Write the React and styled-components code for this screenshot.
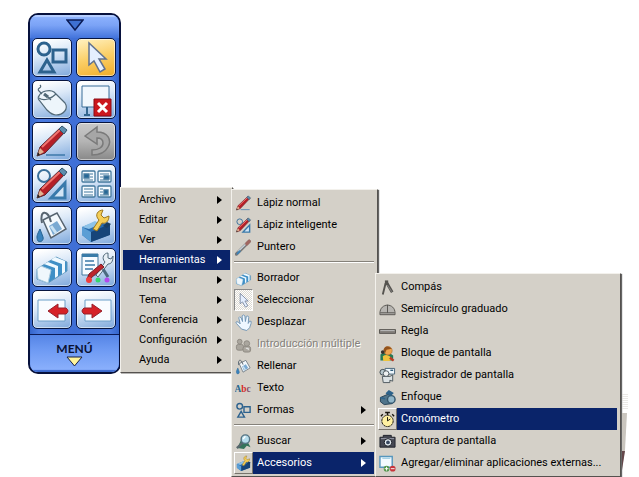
import React from "react";
import styled, { createGlobalStyle, css } from "styled-components";

const Global = createGlobalStyle`
  * { box-sizing: border-box; }
  body { margin: 0; min-height: 100vh; background: #fff; }
  button { font: inherit; color: inherit; border: 0; padding: 0; background: none; }
`;

const Desktop = styled.main`
  display: flex;
  align-items: flex-end;
  width: fit-content;
  padding: 13px 0 0 28px;
  font: 11px/20px Roboto, "DejaVu Sans Condensed", sans-serif;
  color: #000;
`;

const Toolbar = styled.aside`
  display: flex;
  flex-direction: column;
  width: 93px;
  border: 2px solid #07113c;
  border-radius: 10px;
  overflow: hidden;
  background: linear-gradient(90deg, #3566cc, #4b7be0 10%, #3f6fd6 50%, #4b7be0 90%, #3566cc);
`;

const Collapse = styled.button`
  display: flex;
  justify-content: center;
  height: 23px;
  padding-top: 4px;
  background: linear-gradient(#8fb4ff, #7ba3f6 45%, #4374dc);
  box-shadow: inset 0 2px 1px #b8d0ff;
`;

const Tools = styled.div`
  display: grid;
  grid-template-columns: 40px 40px;
  gap: 3px 4px;
  padding: 0 2px 5px;
`;

const faces = {
  blue: "linear-gradient(165deg, #ffffff 8%, #dce9f8 40%, #7fa9dc 100%)",
  gold: "linear-gradient(165deg, #ffedb5 8%, #fbcf68 50%, #f1ad28 100%)",
  gray: "linear-gradient(#c9c9c9, #b4b4b4 50%, #888888)",
};

const ToolButton = styled.button`
  display: flex;
  align-items: center;
  justify-content: center;
  height: 39px;
  border: 1px solid #07153f;
  border-radius: 5px;
  background: ${(p) => faces[p.$face]};
  box-shadow: inset 0 0 0 1px #ffffff88;
  svg { width: 36px; height: 36px; }
`;

const MenuButton = styled.button`
  display: flex;
  flex-direction: column;
  align-items: center;
  height: 38px;
  padding-top: 6px;
  border-top: 1px solid #0c1c58;
  background: linear-gradient(#5585e6, #6e9af3 40%, #8db2fd);
  box-shadow: inset 0 -2px 1px #3a68cb;
  font: bold 12px/15px Lato, sans-serif;
  color: #0a1233;
`;

const Menu = styled.ul`
  position: relative;
  z-index: 1;
  margin: 0 0 1px -1px;
  padding: 2px;
  list-style: none;
  width: max-content;
  min-width: ${(p) => p.$min};
  background: #d4d0c8;
  border: 1px solid;
  border-color: #f3f1ec #55524f #55524f #f3f1ec;
  box-shadow: 1px 1px 0 #77747088;
`;

const Submenu = styled(Menu)`
  position: absolute;
  margin: 0;
  padding-right: 3px;
  left: calc(100% + 1px);
  box-shadow: 1px 1px 1px #666;
  ${(p) => (p.$up ? css`bottom: -3px;` : css`top: -61px;`)}
`;

const Entry = styled.li`
  position: relative;
`;

const Item = styled.button`
  display: flex;
  width: 100%;
  height: ${(p) => (p.$icon ? "22px" : "20px")};
  line-height: ${(p) => (p.$icon ? "22px" : "20px")};
  text-align: left;
  white-space: nowrap;
`;

const IconCell = styled.span`
  display: flex;
  align-items: center;
  justify-content: center;
  flex: none;
  width: 19px;
  border: 1px solid transparent;
  svg { flex: none; width: 17px; height: 17px; }
  ${(p) => p.$state === "raised" && css`border-color: #fff #77736c #77736c #fff;`}
  ${(p) => p.$state === "checked" && css`
    border-color: #888 #fff #fff #888;
    background: repeating-conic-gradient(#fff 0 25%, #dcd9d2 0 50%) 0 0 / 2px 2px;
  `}
`;

const Label = styled.span`
  display: flex;
  flex: 1;
  align-items: center;
  justify-content: space-between;
  padding: 0 8px 0 ${(p) => (p.$icon ? "4px" : "16px")};
  ${(p) => p.$active && css`background: #0a246a; color: #fff;`}
  ${(p) => p.$disabled && css`color: #85827c; text-shadow: 1px 1px 0 #fff;`}
`;

const Separator = styled.hr`
  height: 2px;
  margin: 3px 0 4px;
  border: 0;
  border-top: 1px solid #85817a;
  border-bottom: 1px solid #fff;
`;

const Arrow = () => (
  <svg width="5" height="8" viewBox="0 0 5 8" aria-hidden="true"><path d="M0 0 5 4 0 8Z" fill="currentColor" /></svg>
);

const Backdrop = styled.svg`
  position: absolute;
  left: calc(100% + 1px);
  bottom: 2px;
`;

/* Icon artwork, all on a 36-unit grid */
const pencil = (
  <g>
    <path d="M3 32 6 23 27 3l5 4-21 22Z" fill="#b51f27" stroke="#56242c" />
    <path d="M8 23 27 5" stroke="#f1746e" strokeWidth="2" />
    <path d="m3 32 3-8 4 4Z" fill="#e3b391" />
    <path d="m3 32 1-4 2 3Z" fill="#222" />
    <path d="m25 5 3-3 5 4-3 4Z" fill="#5d8eae" stroke="#34566e" />
  </g>
);
const bucket = (
  <g>
    <path d="m9 12 14-7 9 16-15 9Z" fill="#f3f8fc" stroke="#56636f" strokeWidth="1.5" />
    <path d="m15 18 8-5 5 8-9 6Z" fill="#79a9d2" />
    <path d="m17 18 5 7" stroke="#c9e2f3" strokeWidth="3" />
    <path d="M8 15C5 2 14 1 17 14" fill="none" stroke="#586571" strokeWidth="2" />
    <path d="M6 21C3 27 2 29 4 33c3 2 6-1 5-4Z" fill="#3a83be" stroke="#286493" />
  </g>
);
const toolbox = (
  <g>
    <path d="m4 19 13-5 15 2-1 11-18 7-9-7Z" fill="#276baf" />
    <path d="m13 24 19-8v11l-19 7Z" fill="#164579" />
    <path d="m4 19 9 5v10l-9-7Z" fill="#5b9ed5" />
    <path d="m4 19 13-6 5 3-11 5Z" fill="#8cc2e8" />
    <path d="m15 21 6-9c-5-5-1-10 4-10l-2 5 3 3 5-2c0 6-4 8-7 7l-5 8Z" fill="#f4ce58" stroke="#9d771d" />
    <path d="m25 18 4-4 4 2-4 4Z" fill="#193e62" />
  </g>
);
const art = {
  shapes: <g fill="none" stroke="#2d628e" strokeWidth="3"><circle cx="10" cy="9" r="6" /><path d="M19 10h13v12H19ZM13 20l7 12H6Z" /></g>,
  pointer: <path d="M11 3v22l5-4 6 11 5-3-6-10h7Z" fill="#e5efff" stroke="#62728e" strokeWidth="1.5" />,
  mouse: <g fill="none" stroke="#526977" strokeWidth="1.2"><path d="M5 14c2-5 11-7 15-4l11 11c4 6-2 12-9 12-4 0-6-2-9-5L5 18c-1-1-1-3 0-4Z" fill="#edf5fb" /><path d="M5 16c5 4 13 0 17-4M11 12l6 6M8 12 5 9c-3-3 4-3 1-6" /><path d="m10 12 4 3" strokeWidth="3" /></g>,
  screen: <g><path d="M4 4h27v21H4Z" fill="#f1f7fd" stroke="#386c98" /><path d="M9 25v8m-3 0h6" stroke="#34668f" strokeWidth="2" /><path d="M16 17h17v17H16Z" fill="#cc171d" stroke="#8a0b15" /><path d="m20 21 9 9m0-9-9 9" stroke="#fff" strokeWidth="3" /></g>,
  pen: <g><path d="M12 31h19" stroke="#3d79aa" strokeWidth="1.5" />{pencil}</g>,
  undo: <path d="m7 12 12-9v5c11 0 15 8 11 15-3 6-9 8-16 8v-5c7 0 11-3 11-7s-3-5-6-5v6Z" fill="#a6a6a6" stroke="#7a7a7a" strokeWidth="1.5" />,
  smart: <g><circle cx="10" cy="10" r="6" fill="none" stroke="#3a709b" strokeWidth="2" /><path d="M17 32h14V17Z" fill="#d2e5f5" stroke="#397aab" strokeWidth="3" />{pencil}</g>,
  layout: <g fill="#f8fcff" stroke="#43789d" strokeWidth="1.3"><rect x="4" y="5" width="13" height="11" rx="1" /><rect x="20" y="5" width="13" height="11" rx="1" /><rect x="4" y="20" width="13" height="11" rx="1" /><rect x="20" y="20" width="13" height="11" rx="1" /><path d="M6 8h5v4H6ZM26 10h5v3h-5ZM26 24h4v4h-4Z" fill="#266796" /><path d="M12 8h3m-3 3h3m-9 3h9M22 8h9m-9 3h3m-3 3h9M6 23h9m-9 3h9m-9 3h9m7-6h3m-3 3h3m-3 3h9" strokeWidth="1" /></g>,
  bucket,
  toolbox,
  eraser: <g><path d="m3 19 19-12 11 5v9L14 33 3 29Z" fill="#3e8fc6" stroke="#5d96bd" /><path d="m3 19 4-3 10 4-3 13-10-4Z" fill="#eff7fc" stroke="#aacbe0" /><path d="m10 14 4-2 10 4v10l-3 2V18Zm7-4 4-3 10 4v11l-3 2V14Z" fill="#eff9ff" /></g>,
  custom: <g><path d="M4 4h16v21H4Z" fill="#f7fbff" stroke="#43799f" /><path d="M4 4h16v3H4Z" fill="#397ba8" /><path d="M7 11h9m-9 4h10M7 19h8" stroke="#6a99bd" strokeWidth="2" /><path d="m18 25 9-13c-4-4-1-9 3-9v5l3 1 2-3c0 6-2 8-5 8L20 27Z" fill="#e7eff5" stroke="#536a7a" /><path d="m9 29 2-5 12-10 3 3-13 11Z" fill="#bd252c" stroke="#76202a" /><path d="m25 19 5 8" stroke="#4a6a80" strokeWidth="3" /><g><circle cx="11" cy="30" r="3" fill="#f03c3c" /><circle cx="20" cy="30" r="2.5" fill="#36d86d" /><circle cx="29" cy="30" r="2.5" fill="#b349ee" /></g></g>,
  back: <g><path d="M4 8h27v21H4Z" fill="#f9fcff" stroke="#6d9fc9" /><path d="m14 19 10-7v4h8q4 3 0 6h-8v4Z" fill="#d62127" stroke="#96202a" /></g>,
  next: <g><path d="M7 8h26v21H7Z" fill="#f9fcff" stroke="#6d9fc9" /><path d="M24 19 14 12v4H6q-4 3 0 6h8v4Z" fill="#d62127" stroke="#96202a" /></g>,
  wand: <g strokeLinecap="round"><path d="m3 32 27-27" stroke="#777" strokeWidth="7" /><path d="M7 26 28 6" stroke="#c7d2da" strokeWidth="3" /><path d="m25 10 5-5" stroke="#a06761" strokeWidth="7" /><path d="m5 31 5-5" stroke="#3c82b7" strokeWidth="4" /></g>,
  hand: <path d="M14 32 3 20q-3-5 4-3l4 4L8 8q1-4 5 0l3 8-1-12q3-4 6 0l1 12 2-11q4-3 5 2l-1 13 3-5q5-1 3 5l-3 9-6 6Z" fill="#eef7ff" stroke="#7195b5" strokeWidth="2" />,
  people: <g fill="#aaa69e" stroke="#8d8982" strokeWidth="2"><circle cx="10" cy="12" r="5" /><rect x="3" y="18" width="15" height="12" rx="4" /><circle cx="25" cy="16" r="6" /><rect x="17" y="22" width="16" height="12" rx="4" /><path d="M23 26h5v4" stroke="#eee" /></g>,
  text: <text x="-1" y="26" fontFamily="Liberation Serif, serif" fontSize="20" fontWeight="bold" fill="#286890">A<tspan fill="#d42c28">b</tspan><tspan fill="#84516c">c</tspan></text>,
  search: <g><path d="M5 32 14 12l7-3 12 21-8-3-6 7Z" fill="#35735a" /><path d="m4 32 15-14" stroke="#59676d" strokeWidth="5" /><circle cx="22" cy="13" r="9" fill="#b6ddec" stroke="#557382" strokeWidth="3" /><path d="m17 13 5-6" stroke="#fff" strokeWidth="3" /></g>,
  compass: <g fill="none" stroke="#55534f"><path d="M14 9 8 33" strokeWidth="4" /><path d="m17 9 11 19" strokeWidth="6" /><path d="M16 3v9" strokeWidth="7" /><path d="m18 13 9 14" stroke="#999" strokeWidth="1.5" /></g>,
  protractor: <g fill="#b7b5b1" stroke="#55534f" strokeWidth="2"><path d="M2 26C2 3 34 3 34 26v3H2Z" /><path d="M18 8v17M3 25h30" /></g>,
  ruler: <g><path d="M1 14h34v8H1Z" fill="#85827d" stroke="#55534f" strokeWidth="2" /><path d="M3 16h30" stroke="#bbb" strokeWidth="2" /></g>,
  person: <g><path d="M3 33V20q13-10 27 2v11Z" fill="#267956" /><path d="M8 24q10-8 20 5l-6 5H9Z" fill="#edc33d" /><circle cx="19" cy="12" r="9" fill="#eea44e" stroke="#9b581d" /><path d="M10 10Q13 0 23 5l4 3-11 2-3 7Z" fill="#92531d" /><circle cx="8" cy="15" r="4" fill="#36302d" /><path d="m23 27 8 6" stroke="#bd3a24" strokeWidth="5" /></g>,
  recorder: <g><path d="M13 3h20v12H13Z" fill="#eef7fd" stroke="#436176" strokeWidth="2" /><circle cx="8" cy="11" r="6" fill="#b7c7cd" stroke="#414a50" strokeWidth="2" /><path d="M7 20h16l6-3v13l-6-2v5H9Z" fill="#dce2e4" stroke="#4d575d" strokeWidth="2" /><circle cx="15" cy="14" r="6" fill="#eef1f2" stroke="#4d575d" strokeWidth="2" /><path d="M24 7h6" stroke="#305d7c" strokeWidth="3" /></g>,
  focus: <g><path d="m3 18 16-7 12 8-3 12-17 2L3 27Z" fill="#50748a" stroke="#243f52" strokeWidth="2" /><circle cx="26" cy="22" r="8" fill="#91b6c9" stroke="#34566c" strokeWidth="3" /><path d="m15 10 6-6 8 5-5 5M3 18l10 3" fill="#2c628a" stroke="#2c628a" strokeWidth="3" /></g>,
  watch: <g stroke="#17140c"><path d="M13 3h10M18 3v6M4 11l4-4m20 0 4 4" fill="none" strokeWidth="3" /><circle cx="18" cy="21" r="12" fill="#fff1a1" strokeWidth="2" strokeDasharray="5 1" /><path d="M18 21V13m0 8 6-4" strokeWidth="2" /></g>,
  camera: <g><path d="M2 9h7V5h17v4h8v21H2Z" fill="#464853" stroke="#20222b" strokeWidth="2" /><path d="M4 12h28" stroke="#a0a4b0" strokeWidth="2" /><circle cx="19" cy="20" r="8" fill="#e6edf3" stroke="#151820" strokeWidth="2" /><circle cx="19" cy="20" r="4" fill="#37465e" /></g>,
  addRemove: <g><path d="M2 3h26v23H2Z" fill="#f3faff" stroke="#5696bd" strokeWidth="3" /><path d="M7 7h17" stroke="#a8d2e5" strokeWidth="3" /><circle cx="16" cy="29" r="6" fill="#51954a" /><path d="M12 29h8m-4-4v8" stroke="#fff" strokeWidth="2" /><circle cx="29" cy="29" r="6" fill="#c7353b" /><path d="M25 29h8" stroke="#fff" strokeWidth="2" /></g>,
};

const Icon = ({ name }) => <svg viewBox="0 0 36 36" aria-hidden="true">{art[name]}</svg>;

const tools = [
  ["shapes", "Formas"], ["pointer", "Seleccionar", "gold"],
  ["mouse", "Ratón"], ["screen", "Pantalla"],
  ["pen", "Lápiz"], ["undo", "Deshacer", "gray"],
  ["smart", "Lápiz inteligente"], ["layout", "Páginas"],
  ["bucket", "Rellenar"], ["toolbox", "Accesorios"],
  ["eraser", "Borrador"], ["custom", "Personalizar"],
  ["back", "Anterior"], ["next", "Siguiente"],
];

const accessories = [
  { icon: "compass", label: "Compás" },
  { icon: "protractor", label: "Semicírculo graduado" },
  { icon: "ruler", label: "Regla" },
  { icon: "person", label: "Bloque de pantalla" },
  { icon: "recorder", label: "Registrador de pantalla" },
  { icon: "focus", label: "Enfoque" },
  { icon: "watch", label: "Cronómetro", active: true },
  { icon: "camera", label: "Captura de pantalla" },
  { icon: "addRemove", label: "Agregar/eliminar aplicaciones externas..." },
];

const instruments = [
  { icon: "pen", label: "Lápiz normal" },
  { icon: "smart", label: "Lápiz inteligente" },
  { icon: "wand", label: "Puntero" },
  null,
  { icon: "eraser", label: "Borrador" },
  { icon: "pointer", label: "Seleccionar", checked: true },
  { icon: "hand", label: "Desplazar" },
  { icon: "people", label: "Introducción múltiple", disabled: true },
  { icon: "bucket", label: "Rellenar" },
  { icon: "text", label: "Texto" },
  { icon: "shapes", label: "Formas", arrow: true },
  null,
  { icon: "search", label: "Buscar", arrow: true },
  { icon: "toolbox", label: "Accesorios", arrow: true, active: true, items: accessories, min: "246px", up: true },
];

const mainMenu = [
  "Archivo", "Editar", "Ver", "Herramientas", "Insertar", "Tema", "Conferencia", "Configuración", "Ayuda",
].map((label) => label === "Herramientas"
  ? { label, arrow: true, active: true, items: instruments, min: "147px" }
  : { label, arrow: true });

function Entries({ items }) {
  return items.map((it, i) => it ? (
    <Entry key={it.label} role="none">
      <Item role="menuitem" $icon={it.icon} disabled={it.disabled} aria-haspopup={it.arrow ? "menu" : undefined}>
        {it.icon && (
          <IconCell $state={it.checked ? "checked" : it.active ? "raised" : "flat"}><Icon name={it.icon} /></IconCell>
        )}
        <Label $icon={it.icon} $active={it.active} $disabled={it.disabled}>
          {it.label}{it.arrow && <Arrow />}
        </Label>
      </Item>
      {it.items && (
        <Submenu role="menu" aria-label={it.label} $min={it.min} $up={it.up}>
          <Entries items={it.items} />
          {it.up && (
            <Backdrop width="7" height="80" viewBox="0 0 7 80" aria-hidden="true">
              <path d="M2 0v15M4 0v15M6 0v15" stroke="#d6d3cd" strokeDasharray="1 1" />
              <path d="M1 19h5L4 56 1 74Z" fill="#c9c5be" />
              <path d="M1 57h3L1 76Z" fill="#64474a" />
            </Backdrop>
          )}
        </Submenu>
      )}
    </Entry>
  ) : <li key={i} role="none"><Separator /></li>);
}

export default function App() {
  return (
    <>
      <Global />
      <Desktop>
        <Toolbar>
          <Collapse aria-label="Contraer">
            <svg width="18" height="12" viewBox="0 0 18 12"><path d="M1 1h16L9 11Z" fill="#3e70d2" stroke="#0b1b55" strokeWidth="1.5" /></svg>
          </Collapse>
          <Tools>
            {tools.map(([name, label, face = "blue"]) => (
              <ToolButton key={label} aria-label={label} $face={face}><Icon name={name} /></ToolButton>
            ))}
          </Tools>
          <MenuButton>
            MENÚ
            <svg width="17" height="11" viewBox="0 0 17 11" aria-hidden="true"><path d="M1 1h15L8.500 10Z" fill="#fff59b" stroke="#182044" /></svg>
          </MenuButton>
        </Toolbar>
        <Menu role="menu" aria-label="Menú" $min="113px">
          <Entries items={mainMenu} />
        </Menu>
      </Desktop>
    </>
  );
}
